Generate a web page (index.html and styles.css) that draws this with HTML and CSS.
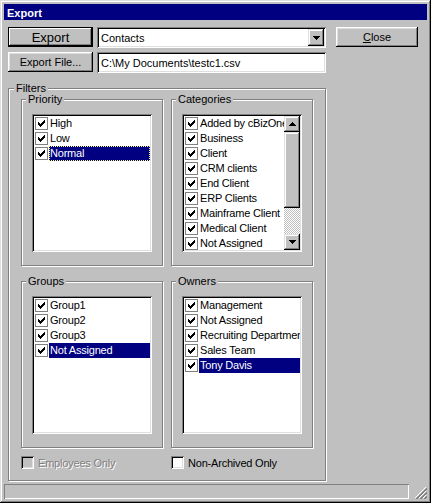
FILE: index.html
```html
<!DOCTYPE html>
<html lang="en">
<head>
    <meta charset="UTF-8">
    <title>Export</title>
    <link rel="stylesheet" href="styles.css">
</head>
<body>
    <!-- shared glyphs -->
    <svg width="0" height="0" class="defs">
        <symbol id="chk" viewBox="0 0 13 13">
            <rect x="0.5" y="0.5" width="12" height="12" fill="#fff" stroke="#808080"/>
            <path d="M9 3h1v1H9z M8 4h2v1H8z M3 5h1v1H3z M7 5h3v1H7z M3 6h2v1H3z M6 6h3v1H6z M3 7h5v1H3z M4 8h3v1H4z M5 9h1v1H5z" fill="#000"/>
        </symbol>
        <symbol id="up" viewBox="0 0 7 4">
            <path d="M3 0h1v1h1v1h1v1h1v1H0V3h1V2h1V1h1z" fill="#000"/>
        </symbol>
        <symbol id="down" viewBox="0 0 7 4">
            <path d="M0 0h7v1H6v1H5v1H4v1H3V3H2V2H1V1H0z" fill="#000"/>
        </symbol>
    </svg>

    <div class="window">
        <div class="titlebar">Export</div>

        <div class="content">
            <div class="top">
                <div class="col col-buttons">
                    <button class="btn btn-default">Export</button>
                    <button class="btn">Export File...</button>
                </div>
                <div class="col col-fields">
                    <div class="combo">
                        <span class="field-text">Contacts</span>
                        <span class="drop"><svg class="arrow"><use href="#down"/></svg></span>
                    </div>
                    <div class="field">
                        <span class="field-text">C:\My Documents\testc1.csv</span>
                    </div>
                </div>
                <button class="btn btn-close"><u>C</u>lose</button>
            </div>

            <fieldset class="group filters">
                <legend>Filters</legend>
                <div class="groups">
                    <fieldset class="group">
                        <legend>Priority</legend>
                        <div class="listbox">
                            <div class="items">
                                <div class="item"><svg class="cb"><use href="#chk"/></svg><span>High</span></div>
                                <div class="item"><svg class="cb"><use href="#chk"/></svg><span>Low</span></div>
                                <div class="item sel focus"><svg class="cb"><use href="#chk"/></svg><span>Normal</span></div>
                            </div>
                        </div>
                    </fieldset>

                    <fieldset class="group">
                        <legend>Categories</legend>
                        <div class="listbox">
                            <div class="items">
                                <div class="item"><svg class="cb"><use href="#chk"/></svg><span>Added by cBizOne</span></div>
                                <div class="item"><svg class="cb"><use href="#chk"/></svg><span>Business</span></div>
                                <div class="item"><svg class="cb"><use href="#chk"/></svg><span>Client</span></div>
                                <div class="item"><svg class="cb"><use href="#chk"/></svg><span>CRM clients</span></div>
                                <div class="item"><svg class="cb"><use href="#chk"/></svg><span>End Client</span></div>
                                <div class="item"><svg class="cb"><use href="#chk"/></svg><span>ERP Clients</span></div>
                                <div class="item"><svg class="cb"><use href="#chk"/></svg><span>Mainframe Client</span></div>
                                <div class="item"><svg class="cb"><use href="#chk"/></svg><span>Medical Client</span></div>
                                <div class="item"><svg class="cb"><use href="#chk"/></svg><span>Not Assigned</span></div>
                            </div>
                            <div class="scrollbar">
                                <div class="sbtn"><svg class="arrow"><use href="#up"/></svg></div>
                                <div class="thumb"></div>
                                <div class="track"></div>
                                <div class="sbtn"><svg class="arrow"><use href="#down"/></svg></div>
                            </div>
                        </div>
                    </fieldset>

                    <fieldset class="group">
                        <legend>Groups</legend>
                        <div class="listbox">
                            <div class="items">
                                <div class="item"><svg class="cb"><use href="#chk"/></svg><span>Group1</span></div>
                                <div class="item"><svg class="cb"><use href="#chk"/></svg><span>Group2</span></div>
                                <div class="item"><svg class="cb"><use href="#chk"/></svg><span>Group3</span></div>
                                <div class="item sel"><svg class="cb"><use href="#chk"/></svg><span>Not Assigned</span></div>
                            </div>
                        </div>
                    </fieldset>

                    <fieldset class="group">
                        <legend>Owners</legend>
                        <div class="listbox">
                            <div class="items">
                                <div class="item"><svg class="cb"><use href="#chk"/></svg><span>Management</span></div>
                                <div class="item"><svg class="cb"><use href="#chk"/></svg><span>Not Assigned</span></div>
                                <div class="item"><svg class="cb"><use href="#chk"/></svg><span>Recruiting Department</span></div>
                                <div class="item"><svg class="cb"><use href="#chk"/></svg><span>Sales Team</span></div>
                                <div class="item sel"><svg class="cb"><use href="#chk"/></svg><span>Tony Davis</span></div>
                            </div>
                        </div>
                    </fieldset>
                </div>

                <div class="options">
                    <label class="opt disabled"><span class="box"></span>Employees Only</label>
                    <label class="opt"><span class="box"></span>Non-Archived Only</label>
                </div>
            </fieldset>
        </div>

        <div class="statusrow">
            <div class="status"></div>
            <svg class="grip" width="12" height="12" viewBox="0 0 12 12">
                <path d="M11 0L0 11 M11 4L4 11 M11 8L8 11" stroke="#fff" stroke-width="1" shape-rendering="crispEdges"/>
                <path d="M12 1L1 12 M12 2L2 12 M12 5L5 12 M12 6L6 12 M12 9L9 12 M12 10L10 12" stroke="#808080" stroke-width="1" shape-rendering="crispEdges"/>
            </svg>
        </div>
    </div>
</body>
</html>
```

FILE: styles.css
```css
* {
    box-sizing: border-box;
}
body {
    margin: 0;
    background: #c0c0c0;
    font-family: "Liberation Sans", Arial, sans-serif;
    font-size: 11px;
    color: #000;
}
.defs {
    position: absolute;
}

/* window frame */
.window {
    width: 431px;
    height: 503px;
    padding: 4px;
    display: flex;
    flex-direction: column;
    background: #c0c0c0;
    box-shadow: inset -1px -1px #000, inset 1px 1px #dfdfdf,
                inset -2px -2px #808080, inset 2px 2px #fff;
}
.titlebar {
    height: 16px;
    line-height: 18px;
    padding-left: 3px;
    background: #000080;
    color: #fff;
    font-weight: bold;
}
.content {
    padding: 7px 4px 0;
}

/* top row */
.top {
    display: flex;
    align-items: flex-start;
}
.col {
    display: flex;
    flex-direction: column;
}
.col-buttons {
    gap: 5px;
    width: 85px;
}
.col-fields {
    gap: 4px;
    width: 229px;
    margin-left: 4px;
}
.btn {
    height: 20px;
    padding: 0;
    border: none;
    background: #c0c0c0;
    font-family: inherit;
    font-size: 11px;
    color: #000;
    box-shadow: inset -1px -1px #000, inset 1px 1px #fff,
                inset -2px -2px #808080, inset 2px 2px #dfdfdf;
}
.btn-default {
    font-size: 13px;
    box-shadow: inset 0 0 0 1px #000, inset -2px -2px #000, inset 2px 2px #fff,
                inset -3px -3px #808080;
}
.btn-close {
    width: 82px;
    margin-left: 10px;
}
.combo,
.field {
    height: 21px;
    display: flex;
    align-items: center;
    padding: 2px;
    background: #fff;
    box-shadow: inset 1px 1px #808080, inset -1px -1px #fff,
                inset 2px 2px #000, inset -2px -2px #dfdfdf;
}
.field-text {
    flex: 1;
    padding-left: 2px;
    white-space: nowrap;
    overflow: hidden;
}
.drop {
    width: 16px;
    height: 17px;
    display: flex;
    align-items: center;
    justify-content: center;
    background: #c0c0c0;
    box-shadow: inset -1px -1px #000, inset 1px 1px #dfdfdf,
                inset -2px -2px #808080, inset 2px 2px #fff;
}
.arrow {
    width: 7px;
    height: 4px;
    display: block;
}

/* group boxes */
.group {
    margin: 0;
    padding: 0 10px 13px;
    min-width: 0;
    border: 1px solid #808080;
    box-shadow: inset 1px 1px #fff, 1px 1px #fff;
}
.group legend {
    padding: 0 2px;
    margin-left: -6px;
    line-height: 11px;
    background: #c0c0c0;
}
.filters {
    width: 318px;
    margin-top: 10px;
    padding: 0 12px 11px;
}
.filters > legend {
    margin-left: -7px;
}
.groups {
    display: grid;
    grid-template-columns: 142px 142px;
    column-gap: 8px;
    row-gap: 10px;
}
.groups .group {
    width: 142px;
}
.listbox {
    width: 120px;
    height: 138px;
    margin-top: 9px;
    padding: 2px;
    display: flex;
    overflow: hidden;
    background: #fff;
    box-shadow: inset 1px 1px #808080, inset -1px -1px #fff,
                inset 2px 2px #000, inset -2px -2px #dfdfdf;
}
.items {
    flex: 1;
    min-width: 0;
    overflow: hidden;
}
.item {
    height: 15px;
    display: flex;
    white-space: nowrap;
}
.cb {
    width: 13px;
    height: 13px;
    margin: 1px 1px 0;
    flex: none;
}
.item span {
    flex: 1;
    padding-left: 1px;
    line-height: 15px;
    letter-spacing: -0.2px;
}
.item.sel span {
    background: #000080;
    color: #fff;
}
.item.focus span {
    outline: 1px dotted #ffff80;
    outline-offset: -1px;
}

/* scrollbar */
.scrollbar {
    width: 16px;
    flex: none;
    display: flex;
    flex-direction: column;
}
.sbtn,
.thumb {
    background: #c0c0c0;
    box-shadow: inset -1px -1px #000, inset 1px 1px #dfdfdf,
                inset -2px -2px #808080, inset 2px 2px #fff;
}
.sbtn {
    height: 16px;
    display: flex;
    align-items: center;
    justify-content: center;
}
.thumb {
    height: 76px;
}
.track {
    flex: 1;
    background: conic-gradient(#fff 25%, #c0c0c0 0 50%, #fff 0 75%, #c0c0c0 0) 0 0 / 2px 2px;
}

/* bottom checkboxes */
.options {
    display: grid;
    grid-template-columns: 142px 142px;
    gap: 8px;
    margin-top: 8px;
}
.opt {
    display: flex;
    align-items: center;
    gap: 4px;
    height: 13px;
    letter-spacing: -0.2px;
}
.box {
    width: 13px;
    height: 13px;
    flex: none;
    background: #fff;
    box-shadow: inset 1px 1px #808080, inset -1px -1px #fff,
                inset 2px 2px #000, inset -2px -2px #dfdfdf;
}
.disabled {
    color: #808080;
    text-shadow: 1px 1px #fff;
}
.disabled .box {
    background: #c0c0c0;
}

/* status bar */
.statusrow {
    margin-top: auto;
    height: 15px;
    display: flex;
    align-items: flex-end;
}
.status {
    width: 405px;
    height: 15px;
    box-shadow: inset 1px 1px #808080, inset -1px -1px #fff;
}
.grip {
    margin-left: auto;
    display: block;
}
```
